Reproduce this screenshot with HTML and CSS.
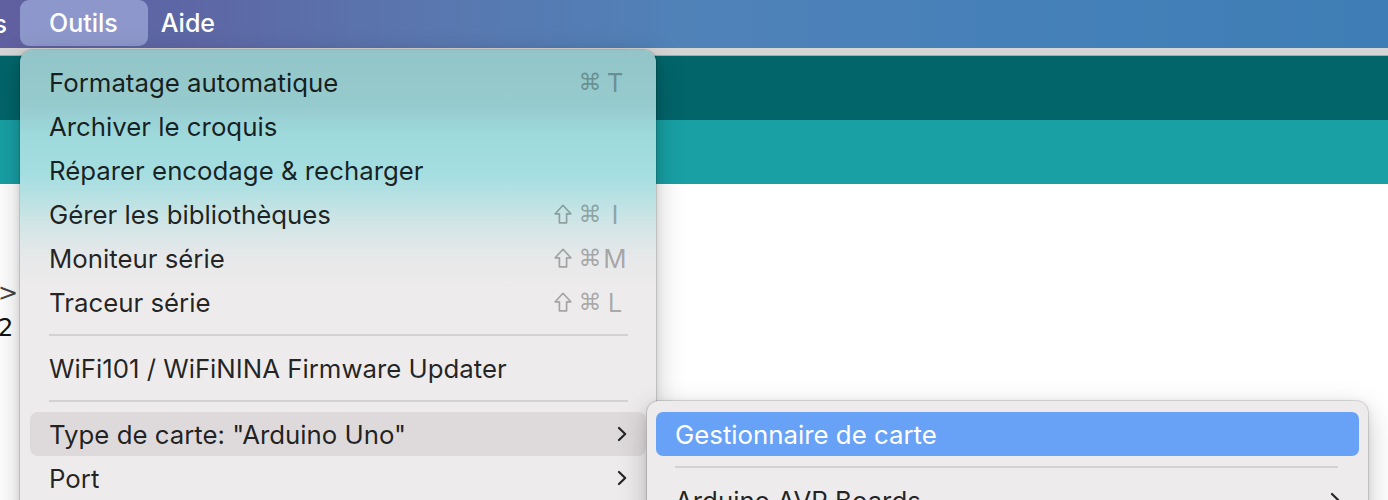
FILE: index.html
```html
<!DOCTYPE html>
<html lang="fr">
<head>
<meta charset="utf-8">
<title>Outils</title>
<link rel="stylesheet" href="styles.css">
</head>
<body>
<div class="screen">
  <div class="menubar">
    <span class="mb-item mb-s">s</span>
    <span class="mb-item mb-active">Outils</span>
    <span class="mb-item mb-aide">Aide</span>
  </div>
  <div class="window">
    <div class="titlestrip"></div>
    <div class="toolbar"></div>
    <div class="tabs"></div>
    <div class="editor">
      <div class="code">
        <div class="code-line gt">&gt;</div>
        <div class="code-line">2</div>
      </div>
    </div>
  </div>

  <div class="menu menu-main">
    <div class="item"><span class="label">Formatage automatique</span><span class="keys"><span class="k k-shift"></span><span class="k k-cmd">⌘</span><span class="k k-key">T</span></span></div>
    <div class="item"><span class="label">Archiver le croquis</span></div>
    <div class="item"><span class="label">Réparer encodage &amp; recharger</span></div>
    <div class="item"><span class="label">Gérer les bibliothèques</span><span class="keys"><span class="k k-shift"><svg class="shift" viewBox="0 0 18 20" width="18" height="20"><path d="M9 1.3 L16.8 9.8 L12.6 9.8 L12.6 18.8 L5.4 18.8 L5.4 9.8 L1.2 9.8 Z"/></svg></span><span class="k k-cmd">⌘</span><span class="k k-key">I</span></span></div>
    <div class="item"><span class="label">Moniteur série</span><span class="keys"><span class="k k-shift"><svg class="shift" viewBox="0 0 18 20" width="18" height="20"><path d="M9 1.3 L16.8 9.8 L12.6 9.8 L12.6 18.8 L5.4 18.8 L5.4 9.8 L1.2 9.8 Z"/></svg></span><span class="k k-cmd">⌘</span><span class="k k-key">M</span></span></div>
    <div class="item"><span class="label">Traceur série</span><span class="keys"><span class="k k-shift"><svg class="shift" viewBox="0 0 18 20" width="18" height="20"><path d="M9 1.3 L16.8 9.8 L12.6 9.8 L12.6 18.8 L5.4 18.8 L5.4 9.8 L1.2 9.8 Z"/></svg></span><span class="k k-cmd">⌘</span><span class="k k-key">L</span></span></div>
    <div class="sep"></div>
    <div class="item"><span class="label">WiFi101 / WiFiNINA Firmware Updater</span></div>
    <div class="sep"></div>
    <div class="item item-open"><span class="label">Type de carte: "Arduino Uno"</span><svg class="chev" viewBox="0 0 10 16" width="10" height="16"><path d="M2 2 L8.2 8 L2 14"/></svg></div>
    <div class="item"><span class="label">Port</span><svg class="chev" viewBox="0 0 10 16" width="10" height="16"><path d="M2 2 L8.2 8 L2 14"/></svg></div>
    <div class="item"><span class="label">Récupérer les informations de la carte</span></div>
  </div>

  <div class="menu menu-sub">
    <div class="item item-sel"><span class="label">Gestionnaire de carte</span></div>
    <div class="sep"></div>
    <div class="item"><span class="label">Arduino AVR Boards</span><svg class="chev" viewBox="0 0 10 16" width="10" height="16"><path d="M2 2 L8.2 8 L2 14"/></svg></div>
    <div class="item"><span class="label">ESP32 Arduino</span></div>
  </div>
</div>
</body>
</html>
```

FILE: styles.css
```css
html, body {
  margin: 0;
  padding: 0;
}
body {
  width: 1388px;
  height: 500px;
  overflow: hidden;
  background: #ffffff;
  font-family: "Inter", "Noto Sans", "Liberation Sans", sans-serif;
}
.screen {
  position: relative;
  width: 1388px;
  height: 500px;
  overflow: hidden;
}

/* menubar */
.menubar {
  height: 48px;
  display: flex;
  align-items: center;
  background: linear-gradient(90deg, #605f9f 0%, #5d68a6 15%, #5a76af 30%, #4f82b8 50%, #4580b9 75%, #3e7db5 100%);
  color: #ffffff;
  font-size: 25px;
  font-weight: 500;
}
.mb-item {
  display: flex;
  align-items: center;
  height: 46px;
  white-space: nowrap;
}
.mb-s {
  width: 20px;
  box-sizing: border-box;
  justify-content: flex-end;
  padding-right: 13px;
}
.mb-active {
  padding: 0 30px 0 29px;
  background: #8d97cb;
  border-radius: 9px;
  margin-top: -2px;
}
.mb-aide {
  margin-left: 13px;
  margin-top: -2px;
}

/* window behind */
.titlestrip {
  height: 7px;
  background: #d5d5d5;
  border-bottom: 1px solid #a9a9a9;
}
.toolbar {
  height: 64px;
  background: #02656a;
}
.tabs {
  height: 64px;
  background: #18a0a4;
}
.editor {
  height: 316px;
  background: #ffffff;
}
.code {
  padding-top: 92px;
  margin-left: -2px;
  font-family: "DejaVu Sans", sans-serif;
  font-size: 24px;
  color: #111111;
}
.code-line {
  height: 35px;
  line-height: 35px;
}
.code-line.gt {
  color: #444444;
}

/* menus */
.menu {
  position: absolute;
  box-sizing: border-box;
  border-radius: 12px;
  padding-top: 11px;
  font-size: 25.8px;
  color: rgba(0, 0, 0, 0.86);
}
.menu-main {
  left: 20px;
  top: 50px;
  width: 636px;
  height: 560px;
  padding-top: 10px;
  background: linear-gradient(180deg, #93c5c8 0px, #96cbce 55px, #9ed9dc 85px, #a5dee1 125px, #b6e1e3 145px, #d2e5e6 175px, #e6e8e9 205px, #eeebec 240px, #eeebec 100%);
  box-shadow: 0 0 0 1px rgba(0, 0, 0, 0.12), 0 10px 30px rgba(0, 0, 0, 0.22), 0 2px 8px rgba(0, 0, 0, 0.10);
}
.menu-sub {
  left: 647px;
  top: 401px;
  width: 721px;
  height: 300px;
  background: #eeebec;
  box-shadow: 0 0 0 1px rgba(0, 0, 0, 0.12), 0 10px 30px rgba(0, 0, 0, 0.22), 0 2px 8px rgba(0, 0, 0, 0.10);
}
.item {
  display: flex;
  align-items: center;
  justify-content: space-between;
  height: 44px;
  margin: 0 10px;
  padding: 0 19px;
  border-radius: 8px;
  white-space: nowrap;
}
.menu-sub .item {
  margin: 0 9px;
  border-radius: 7px;
}
.item-open {
  background: #dedadb;
}
.item-sel {
  background: #68a2f7;
  color: #ffffff;
}
.sep {
  height: 22px;
  margin: 0 28px 0 29px;
  display: flex;
  align-items: center;
}
.sep::before {
  content: "";
  display: block;
  width: 100%;
  height: 2px;
  background: #d4d1d2;
  margin-top: -1px;
}
.menu-sub .sep {
  margin: 0 30px 0 28px;
}
.keys {
  display: flex;
  align-items: center;
  color: rgba(0, 0, 0, 0.30);
  margin-right: -1px;
}
.k {
  display: flex;
  align-items: center;
  justify-content: center;
}
.k-shift {
  width: 22px;
  margin-right: 4px;
}
.k-cmd {
  width: 24px;
  font-family: "DejaVu Sans", sans-serif;
  font-size: 23px;
}
.k-key {
  width: 26px;
  font-size: 25.8px;
}
.shift {
  display: block;
  fill: none;
  stroke: currentColor;
  stroke-width: 1.7;
  stroke-linejoin: round;
}
.chev {
  display: block;
  fill: none;
  stroke: #262626;
  stroke-width: 2.2;
  stroke-linecap: round;
  stroke-linejoin: round;
}
```
